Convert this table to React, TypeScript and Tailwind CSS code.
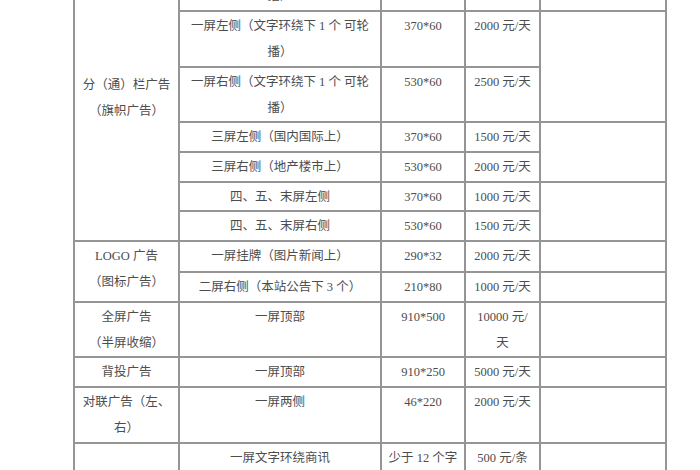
import React from "react";

// one row of the rate table; rowSpan cells are handled per row
type Cell = {
  text?: React.ReactNode;
  rowSpan?: number;
  mid?: boolean;
  low?: boolean;
};

const rows: { h: string; cells: Cell[] }[] = [
  {
    h: "h-[56px]",
    cells: [
      {
        text: (
          <>
            分（通）栏广告
            <br />
            （旗帜广告）
          </>
        ),
        rowSpan: 7,
        mid: true,
      },
      {
        text: (
          <>
            一屏通栏（导航下方 可轮
            <br />
            播）
          </>
        ),
      },
      { text: "960*90" },
      { text: "3000 元/天" },
      { text: "" },
    ],
  },
  {
    h: "h-[56px]",
    cells: [
      {
        text: (
          <>
            一屏左侧（文字环绕下 1 个 可轮
            <br />
            播）
          </>
        ),
      },
      { text: "370*60" },
      { text: "2000 元/天" },
      { text: "", rowSpan: 2 },
    ],
  },
  {
    h: "h-[54px]",
    cells: [
      {
        text: (
          <>
            一屏右侧（文字环绕下 1 个 可轮
            <br />
            播）
          </>
        ),
      },
      { text: "530*60" },
      { text: "2500 元/天" },
    ],
  },
  {
    h: "h-[30px]",
    cells: [
      { text: "三屏左侧（国内国际上）" },
      { text: "370*60" },
      { text: "1500 元/天" },
      { text: "", rowSpan: 2 },
    ],
  },
  {
    h: "h-[30px]",
    cells: [
      { text: "三屏右侧（地产楼市上）" },
      { text: "530*60" },
      { text: "2000 元/天" },
    ],
  },
  {
    h: "h-[28px]",
    cells: [
      { text: "四、五、末屏左侧" },
      { text: "370*60" },
      { text: "1000 元/天" },
      { text: "", rowSpan: 2 },
    ],
  },
  {
    h: "h-[30px]",
    cells: [
      { text: "四、五、末屏右侧" },
      { text: "530*60" },
      { text: "1500 元/天" },
    ],
  },
  {
    h: "h-[31px]",
    cells: [
      {
        text: (
          <>
            LOGO 广告
            <br />
            （图标广告）
          </>
        ),
        rowSpan: 2,
      },
      { text: "一屏挂牌（图片新闻上）" },
      { text: "290*32" },
      { text: "2000 元/天" },
      { text: "" },
    ],
  },
  {
    h: "h-[30px]",
    cells: [
      { text: "二屏右侧（本站公告下 3 个）" },
      { text: "210*80" },
      { text: "1000 元/天" },
      { text: "" },
    ],
  },
  {
    h: "h-[55px]",
    cells: [
      {
        text: (
          <>
            全屏广告
            <br />
            （半屏收缩）
          </>
        ),
      },
      { text: "一屏顶部" },
      { text: "910*500" },
      {
        text: (
          <>
            10000 元/
            <br />天
          </>
        ),
      },
      { text: "" },
    ],
  },
  {
    h: "h-[30px]",
    cells: [
      { text: "背投广告" },
      { text: "一屏顶部" },
      { text: "910*250" },
      { text: "5000 元/天" },
      { text: "" },
    ],
  },
  {
    h: "h-[56px]",
    cells: [
      {
        text: (
          <>
            对联广告（左、
            <br />
            右）
          </>
        ),
      },
      { text: "一屏两侧" },
      { text: "46*220" },
      { text: "2000 元/天" },
      { text: "" },
    ],
  },
  {
    h: "h-[56px]",
    cells: [
      { text: "文字链接广告", low: true },
      { text: "一屏文字环绕商讯" },
      { text: "少于 12 个字" },
      { text: "500 元/条" },
      { text: "" },
    ],
  },
];

const cellClass = (c: Cell) => {
  const base = "border-2 border-[#959595] text-center px-1 leading-[26px] whitespace-nowrap";
  if (c.mid) return `${base} align-middle`;
  if (c.low) return `${base} align-top pt-[20px]`;
  return `${base} align-top pt-[1px]`;
};

export default function App() {
  return (
    <div className="w-[700px] h-[470px] overflow-hidden bg-white">
      <table
        className="table-fixed border-collapse w-[592px] ml-[73px] mt-[-46px] text-[12.5px] text-[#4d4d4d]"
        style={{ fontFamily: '"Liberation Serif", "Noto Sans CJK SC", serif' }}
      >
        <colgroup>
          <col className="w-[105px]" />
          <col className="w-[202px]" />
          <col className="w-[84px]" />
          <col className="w-[75px]" />
          <col className="w-[126px]" />
        </colgroup>
        <tbody>
          {rows.map((row, i) => (
            <tr key={i} className={row.h}>
              {row.cells.map((c, j) => (
                <td key={j} rowSpan={c.rowSpan} className={cellClass(c)}>
                  {c.text}
                </td>
              ))}
            </tr>
          ))}
        </tbody>
      </table>
    </div>
  );
}
